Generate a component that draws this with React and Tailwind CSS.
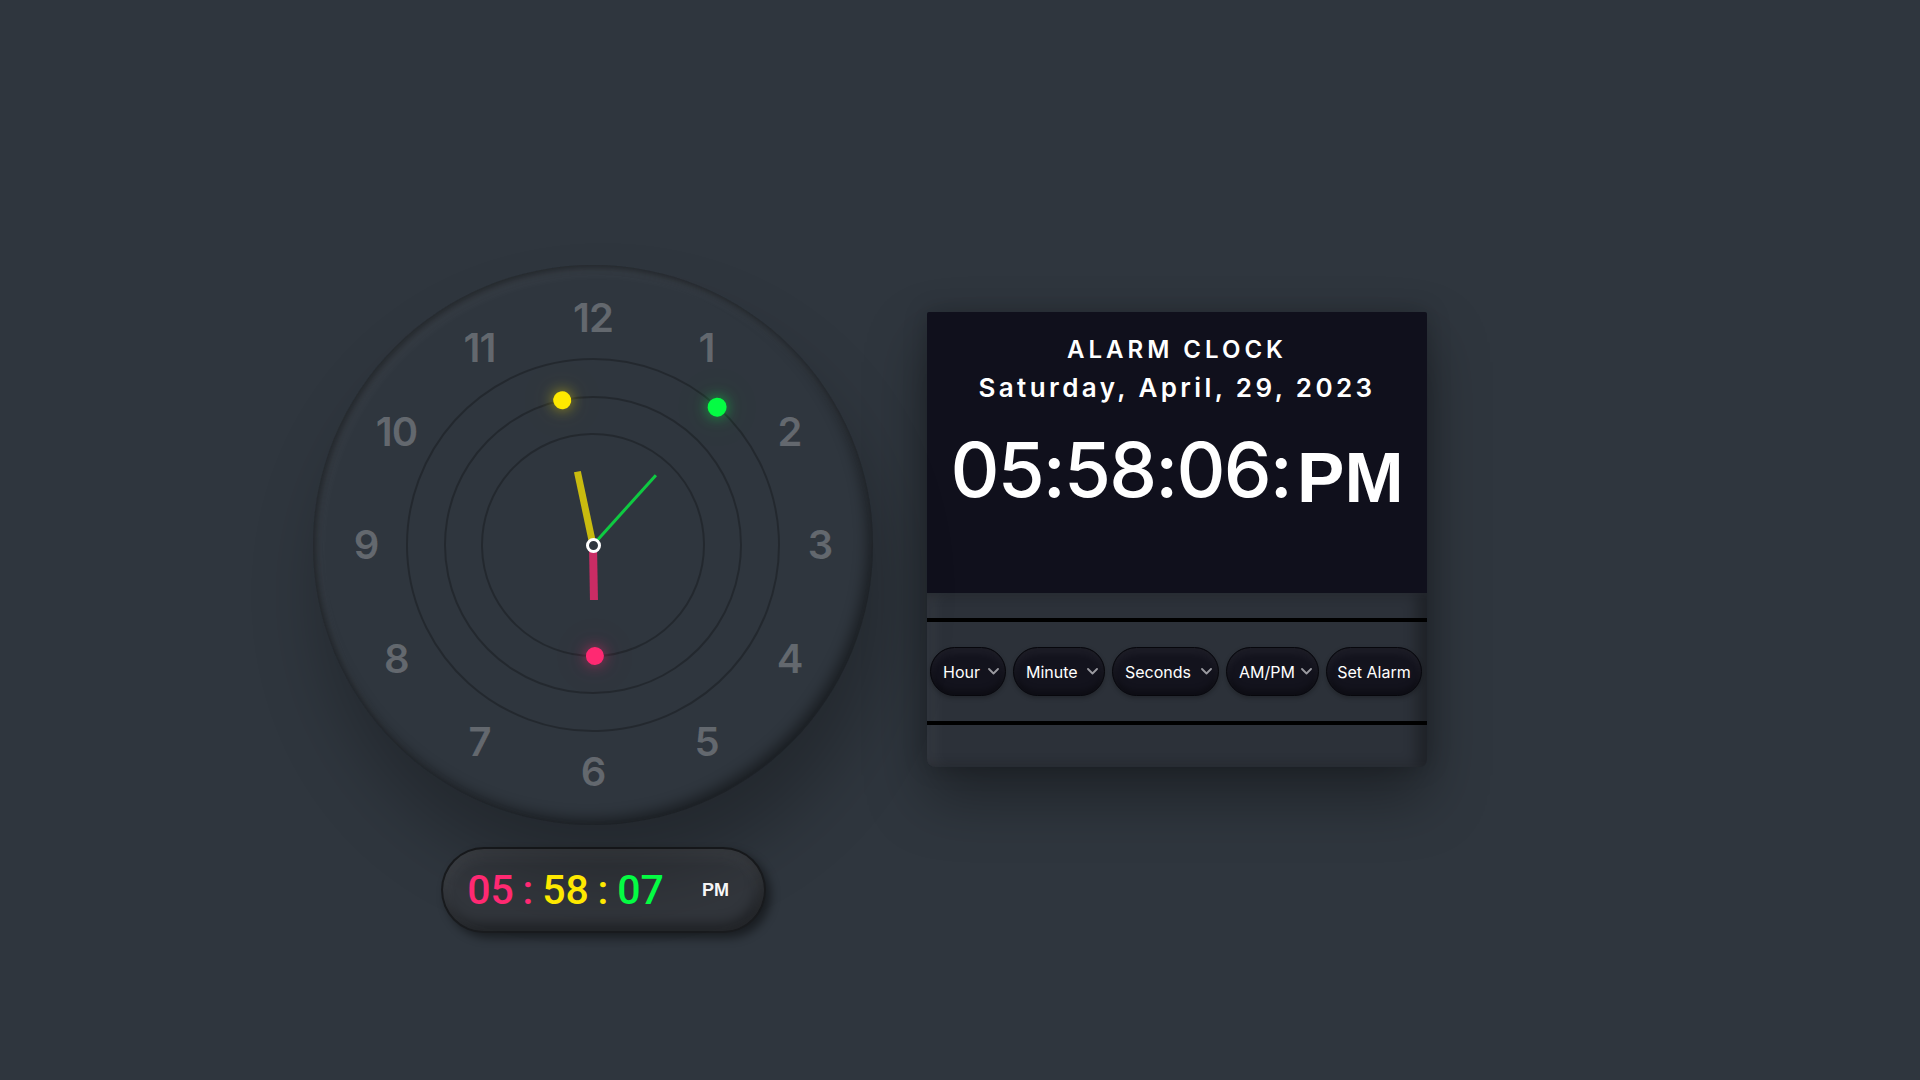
import React from "react";

const NUMS = [1, 2, 3, 4, 5, 6, 7, 8, 9, 10, 11, 12];

function Chevron() {
  return (
    <svg width="11" height="7" viewBox="0 0 11 7" className="shrink-0">
      <polyline points="1,1 5.5,5.5 10,1" fill="none" stroke="#9a9aa0" strokeWidth="1.8" strokeLinecap="round" strokeLinejoin="round" />
    </svg>
  );
}

function Select({ label, w }) {
  return (
    <div
      className={`${w} h-[49px] rounded-full bg-[#13131d] border border-[#07070c] shadow-[inset_0_5px_8px_rgba(255,255,255,0.05),inset_0_-4px_6px_rgba(0,0,0,0.35),0_2px_4px_rgba(0,0,0,0.25)] flex items-center justify-between pl-[12px] pr-[6px] text-white text-[16px] font-['Inter',sans-serif]`}
    >
      <span>{label}</span>
      <Chevron />
    </div>
  );
}

export default function App() {
  const hourDeg = 179;
  const minDeg = 348;
  const secDeg = 42;

  return (
    <div className="min-h-screen w-full bg-[#2f363e] flex items-start pl-[313px] pt-[265px] gap-[54px] overflow-hidden">
      {/* Left column */}
      <div className="flex flex-col">
        <div className="relative w-[560px] h-[560px] rounded-full bg-[#2f363e] shadow-[10px_50px_70px_rgba(0,0,0,0.25),inset_3px_3px_6px_rgba(0,0,0,0.35),inset_4px_6px_14px_rgba(255,255,255,0.07),inset_-5px_-6px_14px_rgba(0,0,0,0.45)]">
          {NUMS.map((n) => {
            const a = (n * 30 * Math.PI) / 180;
            const x = 280 + 227 * Math.sin(a);
            const y = 280 - 227 * Math.cos(a);
            return (
              <div
                key={n}
                className="absolute -translate-x-1/2 -translate-y-1/2 leading-none text-[40px] font-semibold text-white/25 font-['Inter',sans-serif] tracking-[-1px]"
                style={{ left: x, top: y }}
              >
                {n}
              </div>
            );
          })}

          {/* Hour ring */}
          <div
            className="absolute left-[168px] top-[168px] w-[224px] h-[224px] rounded-full border-2 border-black/25 z-[8]"
            style={{ transform: `rotate(${hourDeg}deg)` }}
          >
            <div className="absolute left-1/2 -translate-x-1/2 bottom-1/2 w-[8px] h-[55px] bg-[#ff2972] opacity-75" />
            <div className="absolute left-1/2 -translate-x-1/2 top-[-10px] w-[18px] h-[18px] rounded-full bg-[#ff2972] shadow-[0_0_14px_rgba(255,41,114,0.55),0_0_40px_rgba(255,41,114,0.2)]" />
          </div>

          {/* Minute ring */}
          <div
            className="absolute left-[131px] top-[131px] w-[298px] h-[298px] rounded-full border-2 border-black/25 z-[9]"
            style={{ transform: `rotate(${minDeg}deg)` }}
          >
            <div className="absolute left-1/2 -translate-x-1/2 bottom-1/2 w-[7px] h-[75px] bg-[#fee800] opacity-75" />
            <div className="absolute left-1/2 -translate-x-1/2 top-[-10px] w-[18px] h-[18px] rounded-full bg-[#fee800] shadow-[0_0_14px_rgba(254,232,0,0.55),0_0_40px_rgba(254,232,0,0.2)]" />
          </div>

          {/* Second ring */}
          <div
            className="absolute left-[93px] top-[93px] w-[374px] h-[374px] rounded-full border-2 border-black/25 z-[10]"
            style={{ transform: `rotate(${secDeg}deg)` }}
          >
            <div className="absolute left-1/2 -translate-x-1/2 bottom-1/2 w-[3px] h-[94px] bg-[#04fc43] opacity-75" />
            <div className="absolute left-1/2 -translate-x-1/2 top-[-10px] w-[19px] h-[19px] rounded-full bg-[#04fc43] shadow-[0_0_14px_rgba(4,252,67,0.55),0_0_40px_rgba(4,252,67,0.2)]" />
          </div>

          {/* Center pin */}
          <div className="absolute left-[272.5px] top-[272.5px] w-[15px] h-[15px] rounded-full bg-[#2f363e] border-[3px] border-white z-[20]" />
        </div>

        {/* Digital pill */}
        <div className="mt-[22px] ml-[128px] w-[325px] h-[86px] rounded-full border-2 border-black/50 bg-[#32363c] shadow-[5px_5px_10px_rgba(0,0,0,0.45),inset_0_6px_16px_rgba(255,255,255,0.08),inset_-4px_-6px_14px_rgba(0,0,0,0.45)] flex items-center px-[10px]">
          <div className="relative w-[75px] text-center text-[41px] leading-none font-medium text-[#ff2972] font-['Roboto',sans-serif]">
            05
            <span className="absolute right-0 translate-x-1/2">:</span>
          </div>
          <div className="relative w-[75px] text-center text-[41px] leading-none font-medium text-[#fee800] font-['Roboto',sans-serif]">
            58
            <span className="absolute right-0 translate-x-1/2">:</span>
          </div>
          <div className="relative w-[75px] text-center text-[41px] leading-none font-medium text-[#04fc43] font-['Roboto',sans-serif]">
            07
          </div>
          <div className="w-[75px] text-center text-[18px] leading-none font-bold text-white font-['Liberation_Sans',sans-serif]">
            PM
          </div>
        </div>
      </div>

      {/* Alarm panel */}
      <div className="mt-[47px] w-[500px] h-[455px] flex flex-col rounded-b-[8px] rounded-t-[2px] bg-[#2c3139] shadow-[0_30px_60px_rgba(0,0,0,0.35),0_0_25px_rgba(0,0,0,0.2)] overflow-hidden">
        <div className="h-[281px] bg-[#10101c] flex flex-col items-center pt-[23px] text-white font-['Inter',sans-serif]">
          <div className="text-[24px] leading-[30px] font-semibold tracking-[4px]">ALARM CLOCK</div>
          <div className="mt-[6px] text-[26px] leading-[34px] font-semibold tracking-[3.4px]">Saturday, April, 29, 2023</div>
          <div className="mt-[26px] flex items-baseline">
            <span className="text-[76px] leading-none font-medium tracking-[-1.8px]">05:58:06:</span>
            <span className="ml-[6px] text-[71px] leading-none font-bold font-['Liberation_Sans',sans-serif] translate-y-[5px]">PM</span>
          </div>
        </div>
        <div className="flex-1 flex flex-col shadow-[inset_10px_0_14px_rgba(255,255,255,0.03),inset_-10px_0_14px_rgba(0,0,0,0.3)]">
          <div className="h-[25px]" />
          <div className="h-[4px] bg-black" />
          <div className="h-[99px] flex items-center justify-center gap-[7px] pr-[2px]">
            <Select label="Hour" w="w-[76px]" />
            <Select label="Minute" w="w-[92px]" />
            <Select label="Seconds" w="w-[107px]" />
            <Select label="AM/PM" w="w-[93px]" />
            <div className="w-[96px] h-[49px] rounded-full bg-[#13131d] border border-[#07070c] shadow-[inset_0_5px_8px_rgba(255,255,255,0.05),inset_0_-4px_6px_rgba(0,0,0,0.35),0_2px_4px_rgba(0,0,0,0.25)] flex items-center justify-center text-white text-[16px] font-['Inter',sans-serif]">
              Set Alarm
            </div>
          </div>
          <div className="h-[4px] bg-black" />
          <div className="flex-1" />
        </div>
      </div>
    </div>
  );
}
